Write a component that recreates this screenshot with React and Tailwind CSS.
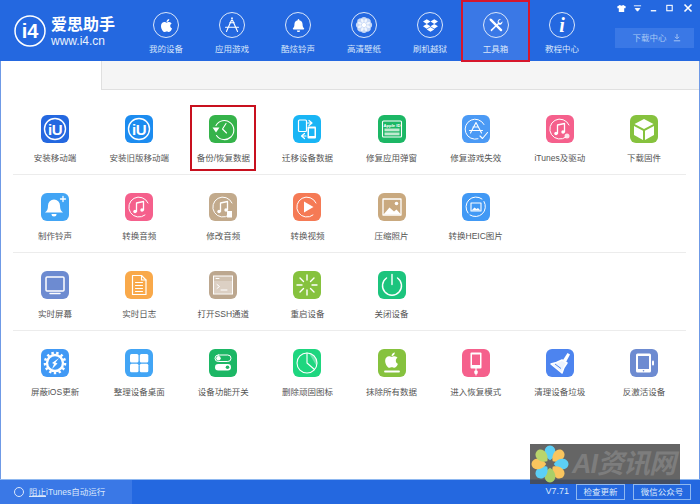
import React from "react";
import { FaApple, FaBell, FaDropbox } from "react-icons/fa";

const W = { stroke: "#fff", fill: "none", strokeLinecap: "round", strokeLinejoin: "round" };

const IU = () => (
  <svg viewBox="0 0 28 28" className="w-7 h-7">
    <circle cx="14" cy="14" r="10.500" {...W} strokeWidth="1.400" />
    <text x="14" y="19.500" textAnchor="middle" fontSize="15" fontWeight="700" letterSpacing="-0.5" fill="#fff" fontFamily="Liberation Sans, sans-serif">iU</text>
  </svg>
);
const Backup = () => (
  <svg viewBox="0 0 28 28" className="w-7 h-7">
    <path d="M7 10.500A9.500 9.500 0 1 1 7.500 20.500" {...W} strokeWidth="1.100" />
    <path d="M3.500 12.500h7l-3.500 5z" fill="#fff" />
    <path d="M17 8.500l-3.500 5.500 4 4" {...W} strokeWidth="1.100" />
  </svg>
);
const Migrate = () => (
  <svg viewBox="0 0 28 28" className="w-7 h-7">
    <rect x="5.500" y="5" width="8" height="11.500" rx="1" {...W} strokeWidth="1.200" />
    <rect x="14.500" y="11.500" width="8.500" height="12" rx="1" fill="#fff" />
    <rect x="16" y="13.500" width="5.500" height="7.500" fill="#19b5f5" />
    <path d="M16 5.500l3 2.500-3 2.500M14.500 8h4" {...W} strokeWidth="1.200" />
    <path d="M11.500 18.500l-3 2.500 3 2.500M13 21H9" {...W} strokeWidth="1.200" />
  </svg>
);
const AppleId = () => (
  <svg viewBox="0 0 28 28" className="w-7 h-7">
    <rect x="4.500" y="6" width="19" height="16" rx="1" {...W} strokeWidth="1.100" />
    <text x="14" y="11.600" textAnchor="middle" fontSize="4.200" fontWeight="700" fill="#fff" fontFamily="Liberation Sans, sans-serif">Apple ID</text>
    <rect x="6.500" y="13.500" width="15" height="2.800" fill="#bfe9cf" />
    <rect x="6.500" y="17.500" width="15" height="2.800" fill="#bfe9cf" />
  </svg>
);
const AppFix = () => (
  <svg viewBox="0 0 28 28" className="w-7 h-7">
    <path d="M22 9.500A10 10 0 1 0 16 23.800" {...W} strokeWidth="1" />
    <path d="M14 7.500L8.500 18M14 7.500L19.500 18M7.500 15.500h13M11 12l5.500 0" {...W} strokeWidth="1.100" />
    <path d="M18 21l2.500 2.500 5-6" {...W} strokeWidth="1.100" />
  </svg>
);
const Music = ({ extra, stroke = 1 }) => (
  <svg viewBox="0 0 28 28" className="w-7 h-7">
    <path d="M23 10A10 10 0 1 0 20 22" {...W} strokeWidth={stroke} />
    <path d="M11.500 18.500V10l7-1.500V17" {...W} strokeWidth="1.300" />
    <circle cx="10" cy="18.500" r="1.700" fill="#fff" />
    <circle cx="17" cy="17" r="1.700" fill="#fff" />
    {extra}
  </svg>
);
const Cube = () => (
  <svg viewBox="0 0 28 28" className="w-7 h-7">
    <path d="M14 4l9.500 5-9.500 5-9.500-5z" fill="#fff" />
    <path d="M4 11l9 4.700V25l-9-5z" fill="#fff" />
    <path d="M24 11l-9 4.700V25l9-5z" fill="#fff" />
  </svg>
);
const BellPlus = () => (
  <svg viewBox="0 0 28 28" className="w-7 h-7">
    <path d="M13 6.500a6 6 0 0 1 6 6c0 4 1 5.500 3 7H4c2-1.500 3-3 3-7a6 6 0 0 1 6-6z" fill="#fff" />
    <path d="M10.500 21h5a2.500 2.500 0 0 1-5 0z" fill="#fff" />
    <path d="M22 3.500v5M19.500 6h5" {...W} strokeWidth="1.300" />
  </svg>
);
const Play = () => (
  <svg viewBox="0 0 28 28" className="w-7 h-7">
    <path d="M23 10A10 10 0 1 0 20 22" {...W} strokeWidth="1" />
    <path d="M11 8.500l9.500 5.500-9.500 5.500z" fill="#fff" />
  </svg>
);
const Photo = () => (
  <svg viewBox="0 0 28 28" className="w-7 h-7">
    <rect x="5" y="6" width="18" height="16" {...W} strokeWidth="1.300" />
    <path d="M5.500 21.500l6-7 4.500 4 2.500-2 4.500 5z" fill="#fff" />
    <circle cx="18.500" cy="10.500" r="1.800" fill="#fff" />
  </svg>
);
const Heic = () => (
  <svg viewBox="0 0 28 28" className="w-7 h-7">
    <path d="M6 20A10 10 0 0 1 20 6M22 8.500A10 10 0 0 1 8 22" {...W} strokeWidth="1" />
    <rect x="9" y="10" width="10" height="8" {...W} strokeWidth="1.100" />
    <path d="M9.500 17.500l3-3 2 1.500 1.500-1 2.500 2.500z" fill="#fff" />
  </svg>
);
const Screen = () => (
  <svg viewBox="0 0 28 28" className="w-7 h-7">
    <rect x="5" y="6" width="18" height="14" rx="1" {...W} strokeWidth="1.500" />
    <path d="M9 22.500h10" {...W} strokeWidth="1.500" />
  </svg>
);
const Log = () => (
  <svg viewBox="0 0 28 28" className="w-7 h-7">
    <path d="M7.500 4.500h9l4.500 4.500v14.500H7.500z" {...W} strokeWidth="1.200" />
    <path d="M16.500 4.500V9H21M10.500 11.500h7M10.500 14.500h7M10.500 17.500h7M10.500 20.500h7" {...W} strokeWidth="1.100" />
  </svg>
);
const Terminal = () => (
  <svg viewBox="0 0 28 28" className="w-7 h-7">
    <rect x="4.500" y="5" width="19" height="18" fill="#fff" fillOpacity="0.3" stroke="#fff" strokeWidth="1" />
    <rect x="5" y="10" width="18" height="12.500" fill="#fff" fillOpacity="0.25" />
    <path d="M8 13.500l2.500 2-2.500 2M12 19h6" {...W} strokeWidth="1" />
    <path d="M7 7.500h3" {...W} strokeWidth="1" />
  </svg>
);
const Restart = () => (
  <svg viewBox="0 0 28 28" className="w-7 h-7">
    <path d="M14 4v5M14 19v5M4 14h5M19 14h5M7 7l3.500 3.500M17.500 17.500L21 21M7 21l3.500-3.500M17.500 10.500L21 7" {...W} strokeWidth="1.400" />
  </svg>
);
const Power = () => (
  <svg viewBox="0 0 28 28" className="w-7 h-7">
    <path d="M19.500 7a9.500 9.500 0 1 1-11 0" {...W} strokeWidth="1.400" />
    <path d="M14 3.500v10" {...W} strokeWidth="1.400" />
  </svg>
);
const Gear = () => (
  <svg viewBox="0 0 28 28" className="w-7 h-7">
    <circle cx="14" cy="14" r="8" {...W} strokeWidth="2.400" />
    <circle cx="14" cy="14" r="10" fill="none" stroke="#fff" strokeWidth="2.600" strokeDasharray="2.400 2.400" />
    <path d="M18 9l-3.500 4.500 2 1L11 20l2-5-2-1z" fill="#fff" />
  </svg>
);
const Tiles = () => (
  <svg viewBox="0 0 28 28" className="w-7 h-7">
    <rect x="5" y="5" width="8.500" height="8.500" rx="1.500" fill="#fff" />
    <rect x="14.800" y="5" width="8.500" height="8.500" rx="1.500" fill="#fff" />
    <rect x="5" y="14.800" width="8.500" height="8.500" rx="1.500" fill="#fff" />
    <rect x="14.800" y="14.800" width="8.500" height="8.500" rx="1.500" fill="#fff" />
  </svg>
);
const Toggles = () => (
  <svg viewBox="0 0 28 28" className="w-7 h-7">
    <rect x="6" y="6" width="16" height="6.500" rx="3.250" {...W} strokeWidth="1" />
    <circle cx="9.500" cy="9.250" r="2.200" fill="#fff" />
    <rect x="6" y="15" width="16" height="6.500" rx="3.250" fill="#fff" />
    <circle cx="18.500" cy="18.250" r="1.800" fill="#1cb765" />
  </svg>
);
const Pie = () => (
  <svg viewBox="0 0 28 28" className="w-7 h-7">
    <circle cx="14" cy="14" r="10" {...W} strokeWidth="1.100" />
    <path d="M14 4v10l7.500 6.500" {...W} strokeWidth="1.100" />
    <path d="M15.500 3.500A10.500 10.500 0 0 1 23.500 17z" fill="#fff" fillOpacity="0.35" />
  </svg>
);
const Erase = () => (
  <svg viewBox="0 0 28 28" className="w-7 h-7">
    <g transform="translate(7 2.500) scale(0.0340)"><path d="M318.700 268.700c-.2-36.700 16.400-64.400 50-84.800-18.800-26.900-47.200-41.700-84.700-44.600-35.500-2.800-74.300 20.700-88.500 20.700-15 0-49.400-19.700-76.400-19.700C63.300 141.200 4 184.800 4 273.500q0 39.300 14.400 81.200c12.800 36.700 59 126.700 107.200 125.200 25.200-.6 43-17.900 75.800-17.900 31.800 0 48.300 17.900 76.400 17.900 48.600-.7 90.400-82.500 102.600-119.300-65.200-30.700-61.700-90-61.700-91.900zm-56.600-164.200c27.300-32.400 24.800-61.900 24-72.500-24.100 1.400-52 16.400-67.900 34.900-17.500 19.800-27.800 44.300-25.600 71.900 26.100 2 49.900-11.400 69.500-34.300z" fill="#fff"/></g>
    <path d="M7 22.500h14" {...W} strokeWidth="1.800" />
  </svg>
);
const Recovery = () => (
  <svg viewBox="0 0 28 28" className="w-7 h-7">
    <rect x="8.500" y="3.500" width="11" height="16" rx="1" fill="#fff" />
    <rect x="10" y="5.500" width="8" height="10.500" fill="#f5608c" />
    <path d="M14 19.500V26" {...W} strokeWidth="1.200" />
    <rect x="12.300" y="21.500" width="3.400" height="3.600" rx="1" fill="#fff" />
  </svg>
);
const Broom = () => (
  <svg viewBox="0 0 28 28" className="w-7 h-7">
    <path d="M17 11l4.500-7 2.500 1.500-4 7.500z" fill="#fff" />
    <path d="M16 11l5 3-3 4.500-2 5.500-11-9 5.500-1.500z" {...W} strokeWidth="1.500" fill="#fff" fillOpacity="0.9" />
    <path d="M9 15l6 4.500" stroke="#4d84ef" strokeWidth="1" />
  </svg>
);
const Deactivate = () => (
  <svg viewBox="0 0 28 28" className="w-7 h-7">
    <rect x="6" y="4.500" width="15" height="19" rx="1.500" fill="#fff" />
    <rect x="8" y="7" width="11" height="13" fill="#6d8bd1" />
    <rect x="22" y="11.500" width="2" height="5" rx="1" fill="#fff" />
    <circle cx="13.500" cy="21.800" r="0.800" fill="#6d8bd1" />
  </svg>
);

const rows = [
  [
    ["安装移动端", "bg-[#2468e0]", <IU />],
    ["安装旧版移动端", "bg-[#1c8cf0]", <IU />],
    ["备份/恢复数据", "bg-[#35b34a]", <Backup />],
    ["迁移设备数据", "bg-[#19b5f5]", <Migrate />],
    ["修复应用弹窗", "bg-[#1cb765]", <AppleId />],
    ["修复游戏失效", "bg-[#4b9af5]", <AppFix />],
    ["iTunes及驱动", "bg-[#f5608c]", <Music extra={<circle cx="21" cy="21" r="2.500" fill="#fff" fillOpacity="0.8" />} />],
    ["下载固件", "bg-[#86c23e]", <Cube />],
  ],
  [
    ["制作铃声", "bg-[#42a5f5]", <BellPlus />],
    ["转换音频", "bg-[#f5608c]", <Music />],
    ["修改音频", "bg-[#c2aa8c]", <Music extra={<rect x="18" y="18" width="5" height="6.500" fill="#fff" />} />],
    ["转换视频", "bg-[#f57a55]", <Play />],
    ["压缩照片", "bg-[#c9a97f]", <Photo />],
    ["转换HEIC图片", "bg-[#4199f5]", <Heic />],
  ],
  [
    ["实时屏幕", "bg-[#6d8bd1]", <Screen />],
    ["实时日志", "bg-[#f9a94a]", <Log />],
    ["打开SSH通道", "bg-[#bca78f]", <Terminal />],
    ["重启设备", "bg-[#86c23e]", <Restart />],
    ["关闭设备", "bg-[#1cc47d]", <Power />],
  ],
  [
    ["屏蔽iOS更新", "bg-[#4199f5]", <Gear />],
    ["整理设备桌面", "bg-[#42a5f5]", <Tiles />],
    ["设备功能开关", "bg-[#1cb765]", <Toggles />],
    ["删除顽固图标", "bg-[#1ed67f]", <Pie />],
    ["抹除所有数据", "bg-[#86c23e]", <Erase />],
    ["进入恢复模式", "bg-[#f5608c]", <Recovery />],
    ["清理设备垃圾", "bg-[#4d84ef]", <Broom />],
    ["反激活设备", "bg-[#6d8bd1]", <Deactivate />],
  ],
];

const NavAppStore = () => (
  <svg viewBox="0 0 26 26" className="w-[26px] h-[26px]">
    <path d="M13.500 5.500L7 20M12.500 5.500L19 20M6 15.500h14M10.500 10.500h5" {...W} strokeWidth="1.200" />
  </svg>
);
const NavFlower = () => (
  <svg viewBox="0 0 26 26" className="w-[26px] h-[26px]">
    {[0, 45, 90, 135, 180, 225, 270, 315].map((a) => (
      <circle key={a} cx="13" cy="7.500" r="3.300" fill="#fff" fillOpacity="0.75" transform={`rotate(${a} 13 13)`} />
    ))}
    <circle cx="13" cy="13" r="2.500" fill="#fff" />
  </svg>
);
const NavTools = () => (
  <svg viewBox="0 0 26 26" className="w-[26px] h-[26px]">
    <path d="M7.500 7.500l11 11" stroke="#fff" strokeWidth="2.600" strokeLinecap="round" />
    <path d="M6 6l2.500 0.500 0 2-2 0z" fill="#fff" />
    <path d="M18.500 6.500a3.200 3.200 0 0 0-3.500 4.500L7 18.500 8 20l7.500-7.500a3.200 3.200 0 0 0 4.500-3.500l-2 1.800-1.800-.5-.4-1.700z" fill="#fff" />
  </svg>
);

const nav = [
  ["我的设备", <FaApple className="w-[15px] h-[15px] text-white" />],
  ["应用游戏", <NavAppStore />],
  ["酷炫铃声", <FaBell className="w-[13px] h-[13px] text-white" />],
  ["高清壁纸", <NavFlower />],
  ["刷机越狱", <FaDropbox className="w-[15px] h-[15px] text-white" />],
  ["工具箱", <NavTools />, true],
  ["教程中心", <span className="text-white text-[20px] font-bold italic leading-none font-['Liberation_Serif',serif]">i</span>],
];

const Petal = ({ a, c }) => (
  <path d="M0 -4C-8 -9 -7 -19 0 -19.500C7 -19 8 -9 0 -4z" fill={c} transform={`rotate(${a})`} />
);

export default function App() {
  return (
    <div className="relative w-[700px] h-[504px] overflow-hidden bg-white flex flex-col font-['Liberation_Sans','Noto_Sans_CJK_SC',sans-serif]">
      <header className="h-[61px] shrink-0 bg-[#2468e0] flex relative">
        <div className="w-[133px] shrink-0 pl-[14px] pt-[15px] flex gap-[5px]">
          <svg viewBox="0 0 32 32" className="w-8 h-8 shrink-0">
            <circle cx="16" cy="16" r="15" {...W} strokeWidth="1.500" />
            <text x="16" y="23" textAnchor="middle" fontSize="20" fontWeight="700" fill="#fff" fontFamily="Liberation Sans, sans-serif">i4</text>
          </svg>
          <div className="text-white">
            <div className="text-[16px] font-bold leading-[17px] whitespace-nowrap font-['Noto_Sans_CJK_SC',sans-serif]">爱思助手</div>
            <div className="text-[12px] leading-3 mt-[3px] text-[#eaf1fc]">www.i4.cn</div>
          </div>
        </div>
        <nav className="flex">
          {nav.map(([label, icon, active]) => (
            <div
              key={label}
              className={
                active
                  ? "box-border w-[69px] h-[62px] -ml-[2px] -mr-px flex flex-col items-center bg-[#3a78e6] border-2 border-[#d6162c] pt-[10px]"
                  : "w-[66px] h-[61px] flex flex-col items-center pt-[12px]"
              }
            >
              <div className="w-[26px] h-[26px] rounded-full border border-[#dbe7fa] flex items-center justify-center">{icon}</div>
              <div className="text-[8.500px] leading-3 mt-[5px] text-[#d8e5fa] whitespace-nowrap">{label}</div>
            </div>
          ))}
        </nav>
        <div className="flex-1 flex flex-col items-end pr-[6px] pt-[2px]">
          <div className="flex items-center gap-[7px] h-[10px] mt-[1px] pr-[1px] text-white">
            <svg viewBox="0 0 10 10" className="w-[9px] h-[9px]"><path d="M3 1L0 3l1 2 1-.500V9h6V4.500L9 5l1-2-3-2-2 1z" fill="#fff" /></svg>
            <svg viewBox="0 0 10 10" className="w-[9px] h-[9px]"><path d="M1 2h8M2.500 5h5l-2.500 3z" stroke="#fff" fill="#fff" /></svg>
            <svg viewBox="0 0 10 10" className="w-[9px] h-[9px]"><path d="M2 7.500h6" stroke="#fff" strokeWidth="1.500" /></svg>
            <svg viewBox="0 0 10 10" className="w-[9px] h-[9px]"><rect x="2" y="1.500" width="6" height="6" fill="none" stroke="#fff" strokeWidth="1.200" /></svg>
            <svg viewBox="0 0 10 10" className="w-[10px] h-[10px] ml-[2px]"><path d="M1.500 1.500l7 7M8.500 1.500l-7 7" stroke="#fff" strokeWidth="1.600" /></svg>
          </div>
          <div className="mt-[15px] w-[79px] h-5 pl-1 bg-[#3a78e6] flex items-center justify-center gap-[6px] text-[#a9c8f5] text-[8.500px]">
            <span>下载中心</span>
            <svg viewBox="0 0 10 10" className="w-2 h-2"><path d="M5 0v5M2.500 3.500L5 6l2.500-2.500M1 8.500h8" stroke="#a9c8f5" strokeWidth="1.200" fill="none" /></svg>
          </div>
        </div>
      </header>

      <main className="flex-1 border-x border-[#6f9ae6] flex flex-col min-h-0">
        <div className="ml-[100px] h-[29px] shrink-0 bg-[#f5f5f5] border-l border-b border-[#e0e0e0]" />
        <div className="pl-[12px] pr-[13px] pt-[7px]">
          {rows.map((row, i) => (
            <div key={i} className={i < 3 ? "h-[78px] border-b border-[#ececec] grid grid-cols-8" : "h-[78px] grid grid-cols-8"}>
              {row.map(([label, bg, icon]) => (
                <div key={label} className="relative flex flex-col items-center pt-[18px]">
                  <div className={`w-7 h-7 rounded-[6px] flex items-center justify-center ${bg}`}>{icon}</div>
                  <div className="mt-[9px] text-[8.500px] leading-[12px] text-[#555555] whitespace-nowrap">{label}</div>
                  {label === "备份/恢复数据" && (
                    <div className="absolute left-[9px] top-[8px] w-[66px] h-[66px] border-2 border-[#c8101e]" />
                  )}
                </div>
              ))}
            </div>
          ))}
        </div>
      </main>

      <footer className="h-[25px] shrink-0 bg-[#2468e0] border-t border-[#8fb8f0] flex items-center text-[#dce8fb] text-[8.500px]">
        <div className="w-[132px] h-full bg-[#3a78e6] flex items-center pl-[14px] gap-[5px]">
          <span className="w-[10px] h-[10px] rounded-full border border-[#dce8fb]" />
          <span><span className="underline">阻止</span>iTunes自动运行</span>
        </div>
        <div className="flex-1 flex items-center justify-end pr-[9px]">
          <span className="mr-[7px] text-[9px]">V7.71</span>
          <span className="w-[49px] h-4 border border-[#8fb8f0] flex items-center justify-center mr-2">检查更新</span>
          <span className="w-[58px] h-4 border border-[#8fb8f0] flex items-center justify-center">微信公众号</span>
        </div>
      </footer>

      <div className="absolute left-[530px] top-[444px] w-[150px] h-[40px] bg-[#4a4a4a]/85 flex items-center">
        <svg viewBox="-20 -20 40 40" className="w-[38px] h-[38px] shrink-0 ml-px">
          <Petal a={0} c="#5ccff5" />
          <Petal a={45} c="#f9c55e" />
          <Petal a={90} c="#5ccff5" />
          <Petal a={135} c="#f9c55e" />
          <Petal a={180} c="#a9cf68" />
          <Petal a={225} c="#5ccff5" />
          <Petal a={270} c="#f9c55e" />
          <Petal a={315} c="#b9d56c" />
        </svg>
        <span className="ml-[3px] text-[27px] leading-none font-bold italic text-[#7d7d7d] whitespace-nowrap tracking-[-1px]">AI资讯网</span>
      </div>
    </div>
  );
}
